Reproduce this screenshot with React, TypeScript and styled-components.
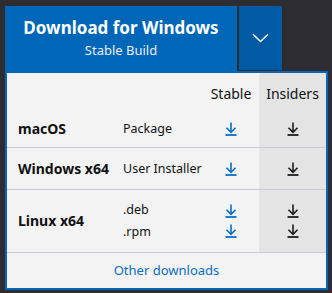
import { createGlobalStyle, styled } from "styled-components";

const GlobalStyle = createGlobalStyle`
  html, body {
    margin: 0;
    padding: 0;
    background: #2c2c32;
  }
  body {
    font-family: "Noto Sans", "Open Sans", sans-serif;
  }
`;

const Page = styled.div`
  padding: 6px 0 0 5px;
  width: 332px;
  height: 293px;
  box-sizing: border-box;
`;

const ButtonRow = styled.div`
  display: flex;
  gap: 2px;
  height: 65px;
`;

const MainButton = styled.button`
  width: 232px;
  height: 65px;
  border: none;
  background: #0066b8;
  color: #fff;
  display: flex;
  flex-direction: column;
  align-items: center;
  justify-content: center;
  font-family: inherit;
  padding: 0 0 2px;
  cursor: pointer;
`;

const Title = styled.span`
  font-size: 17px;
  font-weight: 700;
  line-height: 22px;
`;

const Subtitle = styled.span`
  font-size: 13px;
  line-height: 18px;
  margin-top: 2px;
  color: #e8f0f8;
`;

const ToggleButton = styled.button`
  width: 43px;
  height: 64px;
  border: none;
  background: #005ba4;
  display: flex;
  align-items: center;
  justify-content: center;
  padding: 0 0 1px;
  cursor: pointer;
`;

const Panel = styled.div`
  width: 323px;
  height: 219px;
  box-sizing: border-box;
  border: 2px solid #0066b8;
  background: #f3f3f3;
  display: flex;
  flex-direction: column;
`;

const Table = styled.div`
  display: grid;
  grid-template-columns: 113px 83px 56px 67px;
  grid-template-rows: 37px 38px 42px 63px;
`;

const Cell = styled.div<{ $insiders?: boolean; $line?: boolean; $center?: boolean }>`
  display: flex;
  flex-direction: column;
  justify-content: center;
  align-items: ${(p) => (p.$center ? "center" : "flex-start")};
  gap: 6px;
  background: ${(p) => (p.$insiders ? "#e4e4e4" : "transparent")};
  border-bottom: ${(p) => (p.$line ? "1px solid #c8c8d6" : "none")};
  box-sizing: border-box;
  color: #111;
  white-space: nowrap;
`;

const HeadCell = styled(Cell)`
  justify-content: flex-end;
  font-size: 14px;
  line-height: 18px;
  padding-bottom: 7px;
`;

const OsName = styled.span`
  font-size: 14px;
  font-weight: 700;
  padding-left: 11px;
  line-height: 18px;
`;

const Kind = styled.span`
  font-size: 12.5px;
  line-height: 16px;
  padding-left: 3px;
`;

const Footer = styled.a`
  flex: 1;
  display: flex;
  align-items: center;
  justify-content: center;
  color: #0a6fc2;
  font-size: 13px;
  text-decoration: none;
  padding-bottom: 1px;
`;

const Arrow = ({ color }: { color: string }) => (
  <svg width="12" height="14" viewBox="0 0 12 14" fill="none">
    <path d="M6 0.5V10" stroke={color} strokeWidth="1.6" />
    <path d="M1.5 5.8L6 10.3L10.5 5.8" stroke={color} strokeWidth="1.6" />
    <path d="M0.5 13H11.5" stroke={color} strokeWidth="1.8" />
  </svg>
);

const Chevron = () => (
  <svg width="17" height="10" viewBox="0 0 17 10" fill="none">
    <path d="M1 1.2L8.5 8.5L16 1.2" stroke="#fff" strokeWidth="1.6" />
  </svg>
);

const BLUE = "#0a6fc2";
const DARK = "#1b1b1b";

const rows = [
  { os: "macOS", kinds: ["Package"] },
  { os: "Windows x64", kinds: ["User Installer"] },
  { os: "Linux x64", kinds: [".deb", ".rpm"] },
];

export default function App() {
  return (
    <>
      <GlobalStyle />
      <Page>
        <ButtonRow>
          <MainButton>
            <Title>Download for Windows</Title>
            <Subtitle>Stable Build</Subtitle>
          </MainButton>
          <ToggleButton>
            <Chevron />
          </ToggleButton>
        </ButtonRow>
        <Panel>
          <Table>
            <HeadCell />
            <HeadCell />
            <HeadCell $center>Stable</HeadCell>
            <HeadCell $center $insiders>Insiders</HeadCell>
            {rows.map((r) => [
              <Cell key={r.os + "a"} $line>
                <OsName>{r.os}</OsName>
              </Cell>,
              <Cell key={r.os + "b"} $line>
                {r.kinds.map((k) => (
                  <Kind key={k}>{k}</Kind>
                ))}
              </Cell>,
              <Cell key={r.os + "c"} $line $center>
                {r.kinds.map((k) => (
                  <Arrow key={k} color={BLUE} />
                ))}
              </Cell>,
              <Cell key={r.os + "d"} $line $center $insiders>
                {r.kinds.map((k) => (
                  <Arrow key={k} color={DARK} />
                ))}
              </Cell>,
            ])}
          </Table>
          <Footer href="#">Other downloads</Footer>
        </Panel>
      </Page>
    </>
  );
}
